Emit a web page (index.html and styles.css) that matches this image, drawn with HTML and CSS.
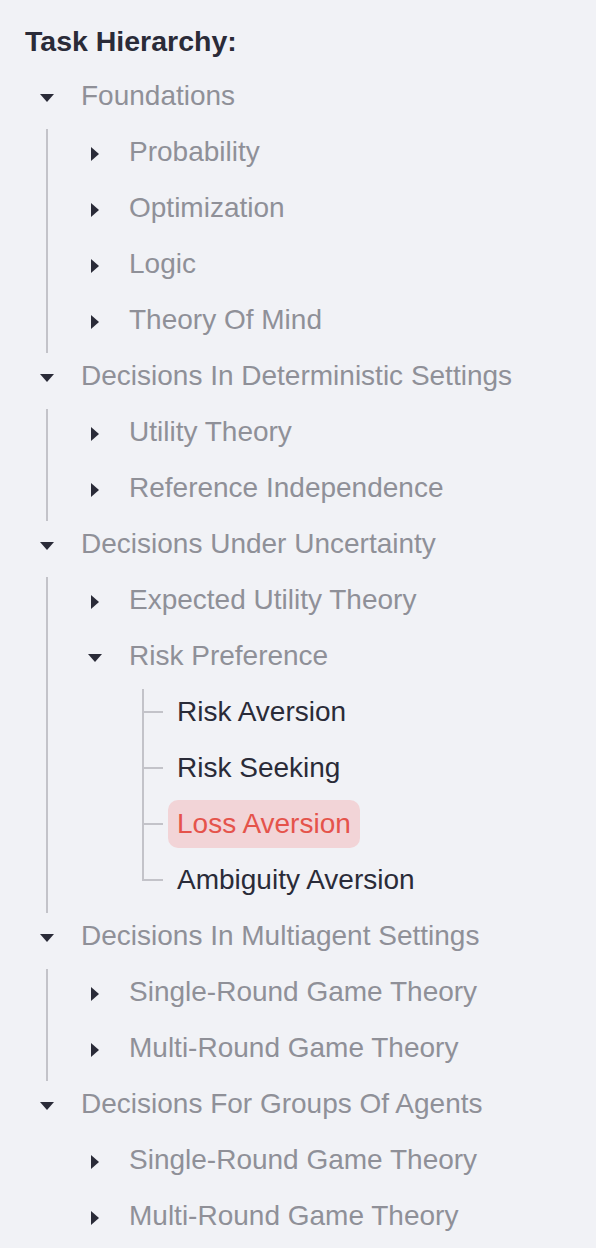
FILE: index.html
```html
<!DOCTYPE html>
<html lang="en">
<head>
<meta charset="utf-8">
<title>Task Hierarchy</title>
<link rel="stylesheet" href="styles.css">
</head>
<body>
<div class="tree">
  <h2 class="title">Task Hierarchy:</h2>
  <ul class="root">
    <li>
      <div class="row"><span class="caret down"></span><span class="label">Foundations</span></div>
      <ul class="branch">
        <li><div class="row"><span class="caret right"></span><span class="label">Probability</span></div></li>
        <li><div class="row"><span class="caret right"></span><span class="label">Optimization</span></div></li>
        <li><div class="row"><span class="caret right"></span><span class="label">Logic</span></div></li>
        <li><div class="row"><span class="caret right"></span><span class="label">Theory Of Mind</span></div></li>
      </ul>
    </li>
    <li>
      <div class="row"><span class="caret down"></span><span class="label">Decisions In Deterministic Settings</span></div>
      <ul class="branch">
        <li><div class="row"><span class="caret right"></span><span class="label">Utility Theory</span></div></li>
        <li><div class="row"><span class="caret right"></span><span class="label">Reference Independence</span></div></li>
      </ul>
    </li>
    <li>
      <div class="row"><span class="caret down"></span><span class="label">Decisions Under Uncertainty</span></div>
      <ul class="branch">
        <li><div class="row"><span class="caret right"></span><span class="label">Expected Utility Theory</span></div></li>
        <li>
          <div class="row"><span class="caret down"></span><span class="label">Risk Preference</span></div>
          <ul class="leaves">
            <li><div class="row"><span class="leaf">Risk Aversion</span></div></li>
            <li><div class="row"><span class="leaf">Risk Seeking</span></div></li>
            <li><div class="row"><span class="leaf active">Loss Aversion</span></div></li>
            <li><div class="row"><span class="leaf">Ambiguity Aversion</span></div></li>
          </ul>
        </li>
      </ul>
    </li>
    <li>
      <div class="row"><span class="caret down"></span><span class="label">Decisions In Multiagent Settings</span></div>
      <ul class="branch">
        <li><div class="row"><span class="caret right"></span><span class="label">Single-Round Game Theory</span></div></li>
        <li><div class="row"><span class="caret right"></span><span class="label">Multi-Round Game Theory</span></div></li>
      </ul>
    </li>
    <li>
      <div class="row"><span class="caret down"></span><span class="label">Decisions For Groups Of Agents</span></div>
      <ul class="branch noline">
        <li><div class="row"><span class="caret right"></span><span class="label">Single-Round Game Theory</span></div></li>
        <li><div class="row"><span class="caret right"></span><span class="label">Multi-Round Game Theory</span></div></li>
      </ul>
    </li>
  </ul>
</div>
</body>
</html>
```
FILE: styles.css
```css
html, body {
  margin: 0;
  padding: 0;
  background: #f1f2f6;
}
body {
  font-family: "Liberation Sans", Arial, sans-serif;
  color: #2a2b38;
}
.tree {
  padding: 26px 0 0 25px;
}
.title {
  margin: 0 0 12px;
  font-size: 28.5px;
  line-height: 30px;
  font-weight: 700;
  color: #2a2b38;
}
ul {
  list-style: none;
  margin: 0;
  padding: 0;
}
.root {
  margin-left: 15px;
}
.row {
  height: 56px;
  display: flex;
  align-items: center;
}
.caret {
  width: 14px;
  height: 14px;
  margin-right: 27px;
  position: relative;
  flex: none;
}
.caret.down::before {
  content: "";
  position: absolute;
  left: 0;
  top: 5px;
  border-left: 7px solid transparent;
  border-right: 7px solid transparent;
  border-top: 8px solid #2a2b38;
}
.caret.right::before {
  content: "";
  position: absolute;
  left: 3px;
  top: 2px;
  border-top: 7px solid transparent;
  border-bottom: 7px solid transparent;
  border-left: 8px solid #2a2b38;
}
.label {
  font-size: 28px;
  color: #8f9098;
  white-space: nowrap;
}
.branch {
  position: relative;
  padding-left: 48px;
}
.branch::before {
  content: "";
  position: absolute;
  left: 6px;
  top: 5px;
  bottom: -5px;
  width: 2px;
  background: #c3c3c9;
}
.branch.noline::before {
  display: none;
}
.leaves {
  position: relative;
  padding-left: 80px;
}
.leaves::before {
  content: "";
  position: absolute;
  left: 54px;
  top: 5px;
  bottom: 27px;
  width: 2px;
  background: #c3c3c9;
}
.leaves li {
  position: relative;
}
.leaves li::after {
  content: "";
  position: absolute;
  left: -24px;
  top: 27px;
  width: 19px;
  height: 2px;
  background: #c3c3c9;
}
.leaf {
  font-size: 28px;
  line-height: 48px;
  height: 48px;
  padding: 0 9px;
  border-radius: 10px;
  color: #2a2b38;
  white-space: nowrap;
}
.leaf.active {
  background: #f2d4d7;
  color: #e5534b;
}
```
